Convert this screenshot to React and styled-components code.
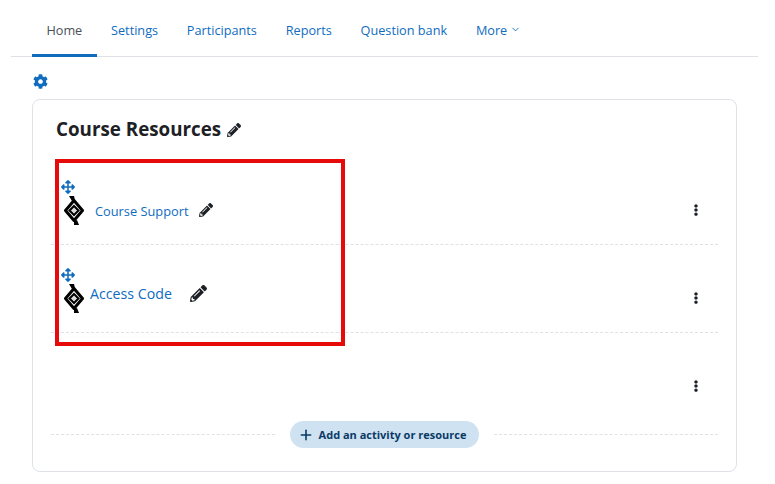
import styled, { createGlobalStyle } from 'styled-components'
import { FaCog, FaPencilAlt, FaArrowsAlt, FaEllipsisV } from 'react-icons/fa'
import { FiChevronDown, FiPlus } from 'react-icons/fi'

const GlobalStyle = createGlobalStyle`
    body {
        margin: 0;
        background: #fff;
        font-family: "Open Sans", "Liberation Sans", sans-serif;
        color: #1d2125;
    }
`

const Page = styled.div`
    position: relative;
    width: 775px;
    height: 484px;
    overflow: hidden;
`

const Nav = styled.nav`
    display: flex;
    margin: 0 17px 0 11px;
    padding-left: 21px;
    height: 57px;
    box-sizing: border-box;
    border-bottom: 1px solid #dee2e6;
`

const Tab = styled.a`
    display: flex;
    align-items: center;
    gap: 3px;
    height: 57px;
    box-sizing: border-box;
    padding: 5px 14.4px 0;
    font-size: 12.7px;
    color: ${p => (p.$active ? '#495057' : '#0f6cbf')};
    border-bottom: 3px solid ${p => (p.$active ? '#0f6cbf' : 'transparent')};
    svg { font-size: 11px; margin-bottom: 1px; }
`

const Main = styled.main`
    padding: 17px 38px 0 32px;
`

const GearRow = styled.div`
    display: flex;
    height: 25px;
    padding-left: 1px;
    color: #0f6cbf;
    font-size: 15px;
`

const Card = styled.section`
    height: 373px;
    box-sizing: border-box;
    border: 1px solid #dee2e6;
    border-radius: 8px;
    padding: 16px 18px 0 18px;
`

const Heading = styled.h2`
    display: flex;
    align-items: center;
    gap: 6px;
    margin: 0 0 16px 5px;
    height: 25px;
    font-size: 18.8px;
    font-weight: 700;
    color: #1d2125;
    svg { font-size: 14px; margin-top: 2px; }
`

const Activity = styled.div`
    display: flex;
    align-items: center;
    justify-content: space-between;
    height: 88px;
    box-sizing: border-box;
    padding-right: 16px;
    border-bottom: ${p => (p.$last ? 'none' : '1px dashed #dee2e6')};
`

const ActivityMain = styled.div`
    display: flex;
    flex-direction: column;
    padding-left: 10px;
    margin-top: 3px;
`

const Drag = styled.div`
    display: flex;
    color: #0f6cbf;
    font-size: 14px;
    height: 16px;
`

const ActivityRow = styled.div`
    display: flex;
    align-items: center;
    gap: ${p => p.$gap}px;
    padding-left: 3px;
`

const ActivityLink = styled.a`
    font-size: ${p => p.$size}px;
    color: #0f6cbf;
    margin-top: ${p => p.$top}px;
    margin-bottom: ${p => p.$lift}px;
`

const Pencil = styled(FaPencilAlt)`
    font-size: ${p => p.$size}px;
    color: #1d2125;
    margin-left: ${p => p.$left}px;
    margin-bottom: ${p => p.$lift}px;
`

const Dots = styled(FaEllipsisV)`
    font-size: 12px;
    color: #1d2125;
    margin-top: ${p => p.$top}px;
`

const AddRow = styled.div`
    display: flex;
    align-items: center;
    gap: 15px;
`

const Dash = styled.div`
    flex: 1;
    border-top: 1px dashed #dee2e6;
`

const AddButton = styled.button`
    display: flex;
    align-items: center;
    gap: 5px;
    height: 27px;
    padding: 0 13px 0 8px;
    border: none;
    border-radius: 14px;
    background: #cfe2f2;
    color: #0b3a66;
    font-family: inherit;
    font-size: 11px;
    font-weight: 700;
    svg { font-size: 16px; stroke-width: 2.400; }
`

const Highlight = styled.div`
    position: absolute;
    left: 55px;
    top: 159px;
    width: 290px;
    height: 187px;
    box-sizing: border-box;
    border: 4px solid #e60a0a;
`

const ModuleIcon = () => (
    <svg width="20" height="29" viewBox="0 0 20 29">
        <path d="M5 0h5l1 4-3 1z" fill="#000" />
        <path d="M10 29h5l-2-5-3 1z" fill="#000" />
        <path d="M10 4.500l8.500 10-8.500 10-8.500-10z" fill="#fff" stroke="#000" strokeWidth="3" strokeLinejoin="round" />
        <path d="M10 10l4.500 4.500-4.500 4.500-4.500-4.500z" fill="#ddd" stroke="#000" strokeWidth="2" />
    </svg>
)

const tabs = ['Settings', 'Participants', 'Reports', 'Question bank']

const App = () => {
    return (
        <Page>
            <GlobalStyle />
            <Nav>
                <Tab $active>Home</Tab>
                {tabs.map(t => <Tab key={t}>{t}</Tab>)}
                <Tab>More <FiChevronDown /></Tab>
            </Nav>
            <Main>
                <GearRow><FaCog /></GearRow>
                <Card>
                    <Heading>Course Resources <FaPencilAlt /></Heading>
                    <Activity>
                        <ActivityMain>
                            <Drag><FaArrowsAlt /></Drag>
                            <ActivityRow $gap={11}>
                                <ModuleIcon />
                                <ActivityLink $size={12.8} $top={2} $lift={0}>Course Support</ActivityLink>
                                <Pencil $size={14} $left={0} $lift={0} />
                            </ActivityRow>
                        </ActivityMain>
                        <Dots $top={18} />
                    </Activity>
                    <Activity>
                        <ActivityMain>
                            <Drag><FaArrowsAlt /></Drag>
                            <ActivityRow $gap={6}>
                                <ModuleIcon />
                                <ActivityLink $size={14.2} $top={0} $lift={10}>Access Code</ActivityLink>
                                <Pencil $size={17} $left={12} $lift={10} />
                            </ActivityRow>
                        </ActivityMain>
                        <Dots $top={18} />
                    </Activity>
                    <Activity $last>
                        <span />
                        <Dots $top={18} />
                    </Activity>
                    <AddRow>
                        <Dash />
                        <AddButton><FiPlus /> Add an activity or resource</AddButton>
                        <Dash />
                    </AddRow>
                </Card>
            </Main>
            <Highlight />
        </Page>
    )
}

export default App
